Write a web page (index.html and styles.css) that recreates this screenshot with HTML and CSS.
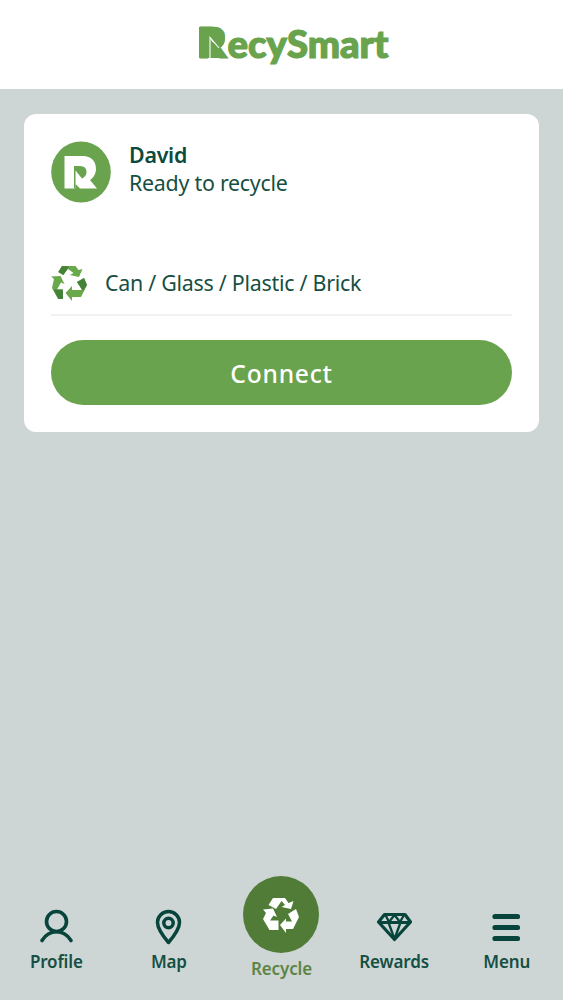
FILE: index.html
```html
<!DOCTYPE html>
<html lang="en">
<head>
<meta charset="utf-8">
<meta name="viewport" content="width=device-width">
<title>RecySmart</title>
<link rel="stylesheet" href="styles.css">
</head>
<body>
<div class="app">
  <header class="header">
    <svg class="brand" width="194" height="48" viewBox="0 0 194 48">
      <text class="brand-text" x="0" y="37.500" textLength="30" lengthAdjust="spacingAndGlyphs" font-size="42">R</text>
      <path d="M2 7H16Q28 8 28 19Q28 25 23 28L31 38H2Z" fill="#6aa34d"/>
      <path d="M13 38.500V17.500L22 28" fill="none" stroke="#fff" stroke-width="1.100"/>
      <path d="M13 17L19 24L15 21.500Z" fill="#fff"/>
      <text class="brand-text" x="30.500" y="37.500" textLength="161" lengthAdjust="spacingAndGlyphs" font-size="37.500">ecySmart</text>
    </svg>
  </header>
  <main class="main">
    <section class="card">
      <div class="user">
        <svg class="avatar" width="60" height="62" viewBox="0 0 60 62">
          <ellipse cx="30" cy="31" rx="29.800" ry="30.500" fill="#6aa34d"/>
          <path d="M13.500 15H32C40 15 45 20 45 28C45 33 42 37 39 39L46 47.500H29L24.500 43V47.500H13.500Z" fill="#fff"/>
          <path d="M23 47.500V25H29Q35.500 25 35.500 31Q35.500 35 31 37.500L24.500 29.500V47.500Z" fill="#6aa34d"/>
        </svg>
        <div class="user-text">
          <div class="name">David</div>
          <div class="status">Ready to recycle</div>
        </div>
      </div>
      <div class="materials">
        <svg width="36" height="36" viewBox="0 0 36 36">
          <g fill="#6aa84c">
            <path d="M11 1H24.500L27.500 5L31.500 4L28 12L19 10L22.500 8L17 4L12 10L7 7Z"/>
            <path d="M0 11.500L9.500 11L13.500 19L10 17.500L6 24.500H12V34H7L1 23L3 14Z"/>
            <path d="M26 17L33 13L36 20L30 32H21V36L14.500 28L21 21V25H31Z"/>
          </g>
          <g fill="#438238"><path d="M11 1L18 1.500L12.500 10L7.500 7Z"/><path d="M2.500 24.500H12V34H7.500Z"/><path d="M26 17L33 13L36 20L32 26Z"/></g>
        </svg>
        <span>Can / Glass / Plastic / Brick</span>
      </div>
      <button class="connect">Connect</button>
    </section>
  </main>
  <nav class="nav">
    <a class="item">
      <svg width="36" height="36" viewBox="0 0 36 36" fill="none" stroke="#07453c" stroke-width="3.600" stroke-linecap="round"><circle cx="18.500" cy="12.500" r="10"/><path d="M4 31.500Q9.500 22.800 18.500 22.800T33 31.500"/></svg>
      <span>Profile</span>
    </a>
    <a class="item">
      <svg width="36" height="36" viewBox="0 0 36 36" fill="none" stroke="#07453c" stroke-width="3.500" stroke-linejoin="round"><path d="M17.500 33.500C14.500 30 6.500 20 6.500 13.500A11 11 0 0 1 28.500 13.500C28.500 20 20.500 30 17.500 33.500Z"/><circle cx="17.500" cy="14" r="4.700"/></svg>
      <span>Map</span>
    </a>
    <a class="item active">
      <span class="bubble">
        <svg width="36" height="36" viewBox="0 0 36 36" fill="#fff">
          <path d="M10 1H22L25.500 6L30.500 4L28 12L18.500 10L22 8L18.500 4L13 12L5.500 8Z"/>
          <path d="M0 12.500L10 11.500L14 20L10.500 18.500L7 23.500H15.500V33H6.500L0 22L3 16Z"/>
          <path d="M25 17L33 12L36 20L30 32H23V36L17 28L23 21.500V24.500H29Z"/>
        </svg>
      </span>
      <span>Recycle</span>
    </a>
    <a class="item">
      <svg width="36" height="36" viewBox="0 0 36 36" fill="none" stroke="#07453c" stroke-width="3.200" stroke-linejoin="round"><path d="M8.500 5.500H29L34.500 13L18.500 30.500L2.500 13Z"/><path d="M2.500 13.500H34.500" /><path d="M12.500 13.500L18.500 30L24.500 13.500M9.500 6L13 13L18.500 6L24 13L28 6" stroke-width="2.300"/></svg>
      <span>Rewards</span>
    </a>
    <a class="item">
      <svg width="36" height="36" viewBox="0 0 36 36" stroke="#07453c" stroke-width="5.200" stroke-linecap="round"><path d="M6 7.500H28.500M6 18.500H28.500M6 29.500H28.500"/></svg>
      <span>Menu</span>
    </a>
  </nav>
</div>
</body>
</html>
```
FILE: styles.css
```css
* { box-sizing: border-box; }
body { margin: 0; font-family: "Noto Sans", sans-serif; color: #164f43; background: #cdd6d5; }
.app { height: 1000px; display: flex; flex-direction: column; }
.header { height: 89px; background: #fff; display: flex; justify-content: center; padding: 20px 0 0 25px; }
.brand { display: block; overflow: visible; }
.brand-text { font-family: Lato, sans-serif; font-weight: 900; fill: #6aa34d; stroke: #6aa34d; stroke-width: 1.2px; }
.main { flex: 1; padding: 25px 24px 0; }
.card { height: 318px; background: #fff; border-radius: 12px; padding: 27px 27px 0; }
.user { display: flex; gap: 18px; height: 62px; }
.user-text { font-size: 21.4px; line-height: 28px; letter-spacing: -0.26px; }
.name { font-weight: 600; color: #0c4a3d; }
.materials { display: flex; align-items: center; gap: 18px; height: 65px; margin-top: 48px; border-bottom: 2px solid #f0f1f1; font-size: 21.4px; letter-spacing: -0.26px; }
.connect { display: block; width: 100%; height: 65px; margin-top: 24px; border: 0; border-radius: 33px; background: #6aa34d; color: #fff; font: 500 24.6px "Noto Sans", sans-serif; letter-spacing: 0.75px; padding-top: 3px; }
.nav { height: 124px; display: grid; grid-template-columns: repeat(5, 112.6px); align-items: start; }
.item { display: flex; flex-direction: column; align-items: center; padding-top: 33px; font-size: 17px; line-height: 24px; font-weight: 600; letter-spacing: -0.15px; gap: 5px; }
.active { padding-top: 0; color: #5d8546; gap: 4px; }
.bubble { width: 76px; height: 77px; border-radius: 50%; background: #507c38; display: flex; align-items: center; justify-content: center; }
```
